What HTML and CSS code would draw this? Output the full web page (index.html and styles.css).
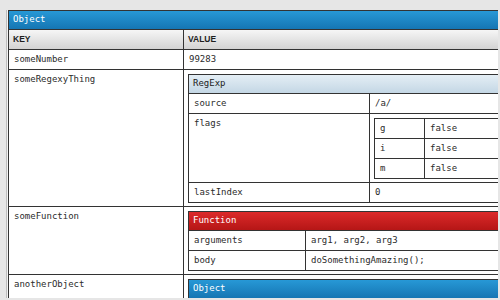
FILE: index.html
```html
<!DOCTYPE html>
<html lang="en">
<head>
    <meta charset="UTF-8">
    <title>prettyPrint</title>
    <link rel="stylesheet" href="styles.css">
</head>
<body>
    <div class="frame">
        <!-- Top level object -->
        <table class="pp wide">
            <colgroup><col class="c-key"><col></colgroup>
            <tr><th colspan="2" class="title obj">Object</th></tr>
            <tr><th class="head">KEY</th><th class="head">VALUE</th></tr>
            <tr><td>someNumber</td><td>99283</td></tr>
            <tr>
                <td>someRegexyThing</td>
                <td class="nest">
                    <table class="pp">
                        <colgroup><col class="c-re"><col></colgroup>
                        <tr><th colspan="2" class="title regexp">RegExp</th></tr>
                        <tr><td>source</td><td>/a/</td></tr>
                        <tr>
                            <td>flags</td>
                            <td class="nest">
                                <table class="pp">
                                    <colgroup><col class="c-flag"><col></colgroup>
                                    <tr><td>g</td><td>false</td></tr>
                                    <tr><td>i</td><td>false</td></tr>
                                    <tr><td>m</td><td>false</td></tr>
                                </table>
                            </td>
                        </tr>
                        <tr><td>lastIndex</td><td>0</td></tr>
                    </table>
                </td>
            </tr>
            <tr>
                <td>someFunction</td>
                <td class="nest">
                    <table class="pp">
                        <colgroup><col class="c-fn"><col></colgroup>
                        <tr><th colspan="2" class="title func">Function</th></tr>
                        <tr><td>arguments</td><td>arg1, arg2, arg3</td></tr>
                        <tr><td>body</td><td>doSomethingAmazing();</td></tr>
                    </table>
                </td>
            </tr>
            <tr>
                <td>anotherObject</td>
                <td class="nest">
                    <table class="pp">
                        <tr><th class="title obj">Object</th></tr>
                        <tr><td class="spacer"></td></tr>
                    </table>
                </td>
            </tr>
        </table>
    </div>
</body>
</html>
```
FILE: styles.css
```css
* {
    box-sizing: border-box;
}

html, body {
    margin: 0;
    height: 100%;
}

body {
    background: #e6e6e6;
    padding: 10px 2px 2px 6px;
    overflow: hidden;
    font-family: "DejaVu Sans Mono", monospace;
    font-size: 9px;
    color: #2b2b2b;
}

/* clipping window round the dump */
.frame {
    height: 288px;
    overflow: hidden;
    border-left: 1px solid #bdbdbd;
    padding-left: 1px;
    background: #f3f3f3;
}

/* tables */
.pp {
    border-collapse: separate;
    border-spacing: 0;
    table-layout: fixed;
    width: 100%;
    background: #fff;
    border-top: 1px solid #333;
    border-left: 1px solid #333;
}

.wide {
    width: 720px;
}

.pp td, .pp th {
    border-right: 1px solid #333;
    border-bottom: 1px solid #333;
    padding: 4px 5px;
    line-height: 11px;
    text-align: left;
    vertical-align: top;
    white-space: nowrap;
    font-weight: normal;
}

.c-key { width: 175px; }
.c-re { width: 181px; }
.c-flag { width: 50px; }
.c-fn { width: 117px; }

.pp td.nest {
    padding: 4px 4px 3px 4px;
}

.pp td.spacer {
    height: 20px;
}

/* header rows */
.pp th.title {
    padding: 3px 4px 4px;
}

.obj {
    color: #fff;
    background: linear-gradient(#2798d6, #1576b3);
}

.func {
    color: #fff;
    background: linear-gradient(#dc2a2a, #b51616);
}

.regexp {
    color: #222;
    font-weight: bold;
    background: linear-gradient(#e4eef5, #c4d7e5);
}

.pp th.head {
    font-family: "Liberation Sans", Arial, sans-serif;
    font-size: 8.5px;
    font-weight: bold;
    color: #1e1e1e;
    padding-left: 4px;
    background: linear-gradient(#f6f6f6, #d3d3d3);
}
```
